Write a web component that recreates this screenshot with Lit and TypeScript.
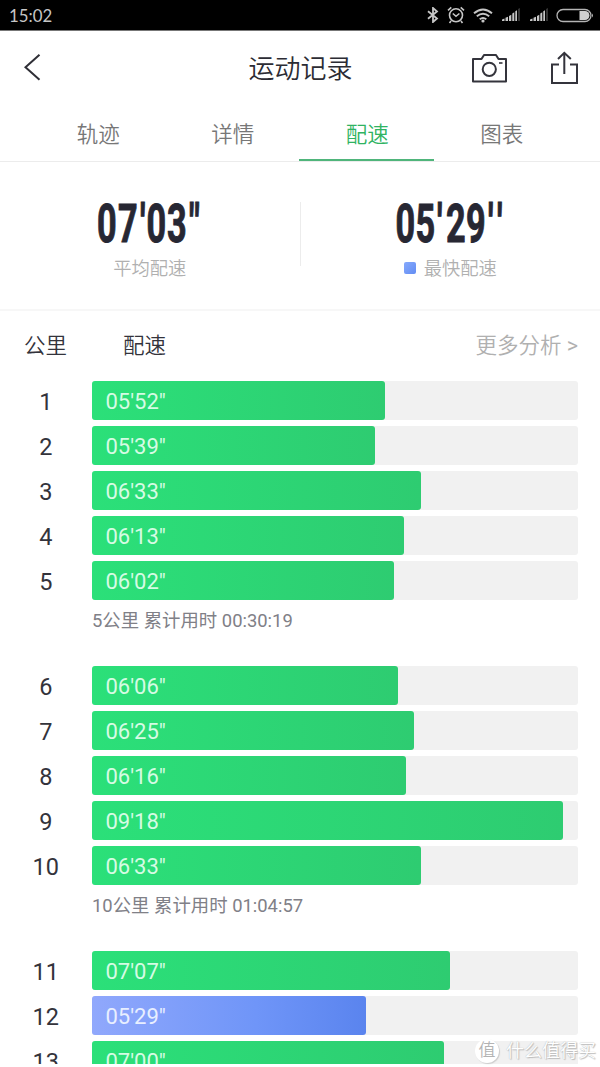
import { LitElement, html, css, svg } from "lit";
import { customElement } from "lit/decorators.js";

interface Split { km: number; pace: string; width: number; fastest?: boolean }
interface Group { splits: Split[]; total?: string }

const groups: Group[] = [
  {
    splits: [
      { km: 1, pace: "05'52\"", width: 293.5 },
      { km: 2, pace: "05'39\"", width: 283 },
      { km: 3, pace: "06'33\"", width: 329.5 },
      { km: 4, pace: "06'13\"", width: 312 },
      { km: 5, pace: "06'02\"", width: 302.5 },
    ],
    total: "5公里 累计用时 00:30:19",
  },
  {
    splits: [
      { km: 6, pace: "06'06\"", width: 306.5 },
      { km: 7, pace: "06'25\"", width: 322.5 },
      { km: 8, pace: "06'16\"", width: 314.5 },
      { km: 9, pace: "09'18\"", width: 471 },
      { km: 10, pace: "06'33\"", width: 329.5 },
    ],
    total: "10公里 累计用时 01:04:57",
  },
  {
    splits: [
      { km: 11, pace: "07'07\"", width: 358.5 },
      { km: 12, pace: "05'29\"", width: 274.5, fastest: true },
      { km: 13, pace: "07'00\"", width: 352.5 },
    ],
  },
];

const bigDigits = (glyphs: [string, number][]) => svg`
  ${glyphs.map(([g, x]) => svg`<text transform="translate(${x} 53.5) scale(.64 1)">${g}</text>`)}`;

const signal = html`<svg class="signal" width="20" height="14" viewBox="0 0 20 14">
  <path d="M1 13v-1.5l2.5-1V13zM4.5 13v-3.2l2.5-1V13zM8 13V8l2.3-1.2V13zM11.3 13V5.5l2-1.3V13zM14.3 13V3.2l1.7-1V13z" fill="#c6c6c6"/>
  <path d="M17 13V1l2-1v13z" fill="#333"/></svg>`;

@customElement("app-root")
export class AppRoot extends LitElement {
  static styles = css`
    :host {
      display: flex; flex-direction: column; box-sizing: border-box;
      height: 1067px; overflow: hidden; position: relative; background: #fff;
      font-family: Roboto, "Noto Sans CJK SC", sans-serif; color: #33333b;
    }
    svg { display: block; flex: none; }
    .status {
      flex: none; height: 30px; background: #000; border-bottom: 1px solid #777;
      display: flex; align-items: center;
      justify-content: space-between; padding: 0 6px 0 9px; color: #c6c6c6;
    }
    .clock { font: 16.8px/30px Lato, sans-serif; padding-top: 2px; }
    .sys { display: flex; align-items: center; }
    .alarm, .wifi { margin-left: 8px; }
    .battery { margin-left: 7px; }
    .signal { margin-left: 8px; }
    .header {
      flex: none; height: 75px; display: grid; grid-template-columns: 1fr auto 1fr;
      align-items: center; padding: 0 22px 0 23px;
    }
    .back { margin-top: -3px; }
    .title { font-size: 26px; line-height: 36px; color: #2c2c34; padding-top: 1px; font-weight: 350; }
    .actions { display: flex; justify-content: flex-end; align-items: center; gap: 43px; margin-top: -2px; }
    .tabs {
      flex: none; height: 55px; display: flex; padding: 0 32px 0 30px;
      border-bottom: 1px solid #ececec;
    }
    .tab {
      flex: 1; text-align: center; font-size: 21.5px; line-height: 57px; color: #777;
      height: 55px; box-sizing: border-box; font-weight: 350; padding-left: 2px;
    }
    .active { color: #2fb362; border-bottom: 2px solid #4fb57b; }
    .summary {
      flex: none; height: 147px; display: flex; border-bottom: 2px solid #f7f7f7;
    }
    .stat { flex: 1; display: flex; flex-direction: column; align-items: center; padding-top: 26px; }
    .big {
      font-family: Roboto, sans-serif; font-weight: 700; font-size: 53.5px; fill: #272733;
      stroke: #272733; stroke-width: 1; overflow: visible;
    }
    .caption {
      display: flex; align-items: center; gap: 8px; font-size: 18.3px; line-height: 26px;
      color: #b0b0b0; margin-top: 2px; font-weight: 350;
    }
    .swatch { width: 12px; height: 12px; border-radius: 2px; background: linear-gradient(135deg, #86a9fc, #638df3); margin-top: -2px; }
    .rule { width: 1px; height: 64px; margin-top: 40px; background: #ececec; }
    .columns {
      flex: none; height: 70px; display: flex; font-size: 21.5px; line-height: 70px;
      padding: 0 22px 0 24px; font-weight: 350;
    }
    .km-label { width: 99px; }
    .more { margin-left: auto; color: #b0b0b0; }
    .arrow { font-weight: 400; }
    .list { height: 683px; flex: none; overflow: hidden; }
    .row { display: flex; height: 38.5px; margin-bottom: 6.5px; padding-right: 22px; }
    .km { width: 91.5px; text-align: center; font-size: 23.5px; line-height: 42px; flex: none; }
    .track { flex: 1; background: #f1f1f1; border-radius: 3px; }
    .bar {
      height: 100%; box-sizing: border-box; border-radius: 3px; padding-left: 14px;
      font-size: 22px; line-height: 42px; color: #d6fbe4;
      background: linear-gradient(90deg, #2be079, #2ecc71);
    }
    .fastest { background: linear-gradient(90deg, #90a8fc, #6f95f8 60%, #5a84ee); color: #e8efff; }
    .total {
      height: 60px; padding-left: 92px; font-size: 18.4px; line-height: 29px; color: #808087;
      box-sizing: border-box;
    }
    .mark {
      position: absolute; right: 4px; bottom: 3px; display: flex; align-items: center; gap: 7px;
      color: #fff; font-size: 18px; line-height: 26px; font-weight: 350;
      text-shadow: 1px 1px 1px #bbb, 0 0 1px #aaa;
    }
    .seal {
      width: 24px; height: 24px; border-radius: 50%; background: #fff; color: #b3b3b3;
      text-align: center; font-size: 17px; line-height: 23px; text-shadow: none;
      box-shadow: 1px 1px 1px #ccc;
    }
  `;

  render() {
    return html`
      <div class="status">
        <div class="clock">15:02</div>
        <div class="sys">
          <svg width="12" height="16" viewBox="0 0 12 16" fill="none" stroke="#c6c6c6" stroke-width="1.8"><path d="M1 4.3 10 11.5 6 15V1l4 3.5L1 11.7"/></svg>
          <svg class="alarm" width="18" height="18" viewBox="0 0 18 18" fill="none" stroke="#c6c6c6" stroke-width="1.6"><circle cx="9" cy="9.3" r="6.5"/><path d="M5.8 7.5 9 10.3l3.4-2.8M1 4.3 4.3 1.4M17 4.3l-3.3-2.9M4 15l-1.5 2M14 15l1.5 2"/></svg>
          <svg class="wifi" width="20" height="15" viewBox="0 0 20 15" fill="none" stroke="#c6c6c6" stroke-width="1.9"><path d="M1 5.2q9-7.6 18 0M3.8 8.3q6.2-5 12.4 0M6.7 11.2q3.3-2.6 6.6 0"/><circle cx="10" cy="13" r="1.6" fill="#c6c6c6" stroke="none"/></svg>
          ${signal}
          ${signal}
          <svg class="battery" width="38" height="15" viewBox="0 0 38 15"><rect x="1" y="1.5" width="34" height="12" rx="6" fill="none" stroke="#b4b4b4" stroke-width="1.3"/><path d="M23.5 3h5.5a4.5 4.5 0 0 1 0 9h-5.5z" fill="#d0d0d0"/><path d="M36 5.5q2 2 0 4" fill="#b4b4b4"/></svg>
        </div>
      </div>
      <div class="header">
        <svg class="back" width="18" height="28" viewBox="0 0 18 28" fill="none" stroke="#2f2f36" stroke-width="2"><path d="M16.5 1.8 2.5 14.3l14 12.4"/></svg>
        <div class="title">运动记录</div>
        <div class="actions">
          <svg width="36" height="32" viewBox="0 0 36 32" fill="none" stroke="#34343c" stroke-width="2"><path d="M2 7h8.5L13 3h12l2.5 4H35v22.5H2z" stroke-linejoin="round"/><circle cx="18.3" cy="17.3" r="6.6"/><path d="M28 11h3.5" stroke-width="1.6"/></svg>
          <svg width="28" height="36" viewBox="0 0 28 36" fill="none" stroke="#34343c" stroke-width="2"><path d="M9 14.5H2V33h25V14.5h-7M14.3 24V3M8 9l6.3-6.2L20.8 9"/></svg>
        </div>
      </div>
      <div class="tabs">
        <div class="tab">轨迹</div>
        <div class="tab">详情</div>
        <div class="tab active">配速</div>
        <div class="tab">图表</div>
      </div>
      <div class="summary">
        <div class="stat">
          <svg class="big" width="106" height="66">${bigDigits([["0", 0], ["7", 21], ["'", 43], ["0", 49.5], ["3", 70], ["\"", 92]])}</svg>
          <div class="caption">平均配速</div>
        </div>
        <div class="rule"></div>
        <div class="stat">
          <svg class="big" width="110" height="66">${bigDigits([["0", 0.5], ["5", 20.5], ["'", 42], ["2", 51], ["9", 71], ["'", 93], ["'", 102]])}</svg>
          <div class="caption"><span class="swatch"></span>最快配速</div>
        </div>
      </div>
      <div class="columns">
        <div class="km-label">公里</div>
        <div>配速</div>
        <div class="more">更多分析 <span class="arrow">&gt;</span></div>
      </div>
      <div class="list">
        ${groups.map((g) => html`<div class="group">
          ${g.splits.map((s) => html`<div class="row">
            <div class="km">${s.km}</div>
            <div class="track"><div class="bar ${s.fastest ? "fastest" : ""}" style="width:${s.width}px">${s.pace}</div></div>
          </div>`)}
          ${g.total ? html`<div class="total">${g.total}</div>` : ""}
        </div>`)}
      </div>
      <div class="mark"><span class="seal">值</span>什么值得买</div>
    `;
  }
}
